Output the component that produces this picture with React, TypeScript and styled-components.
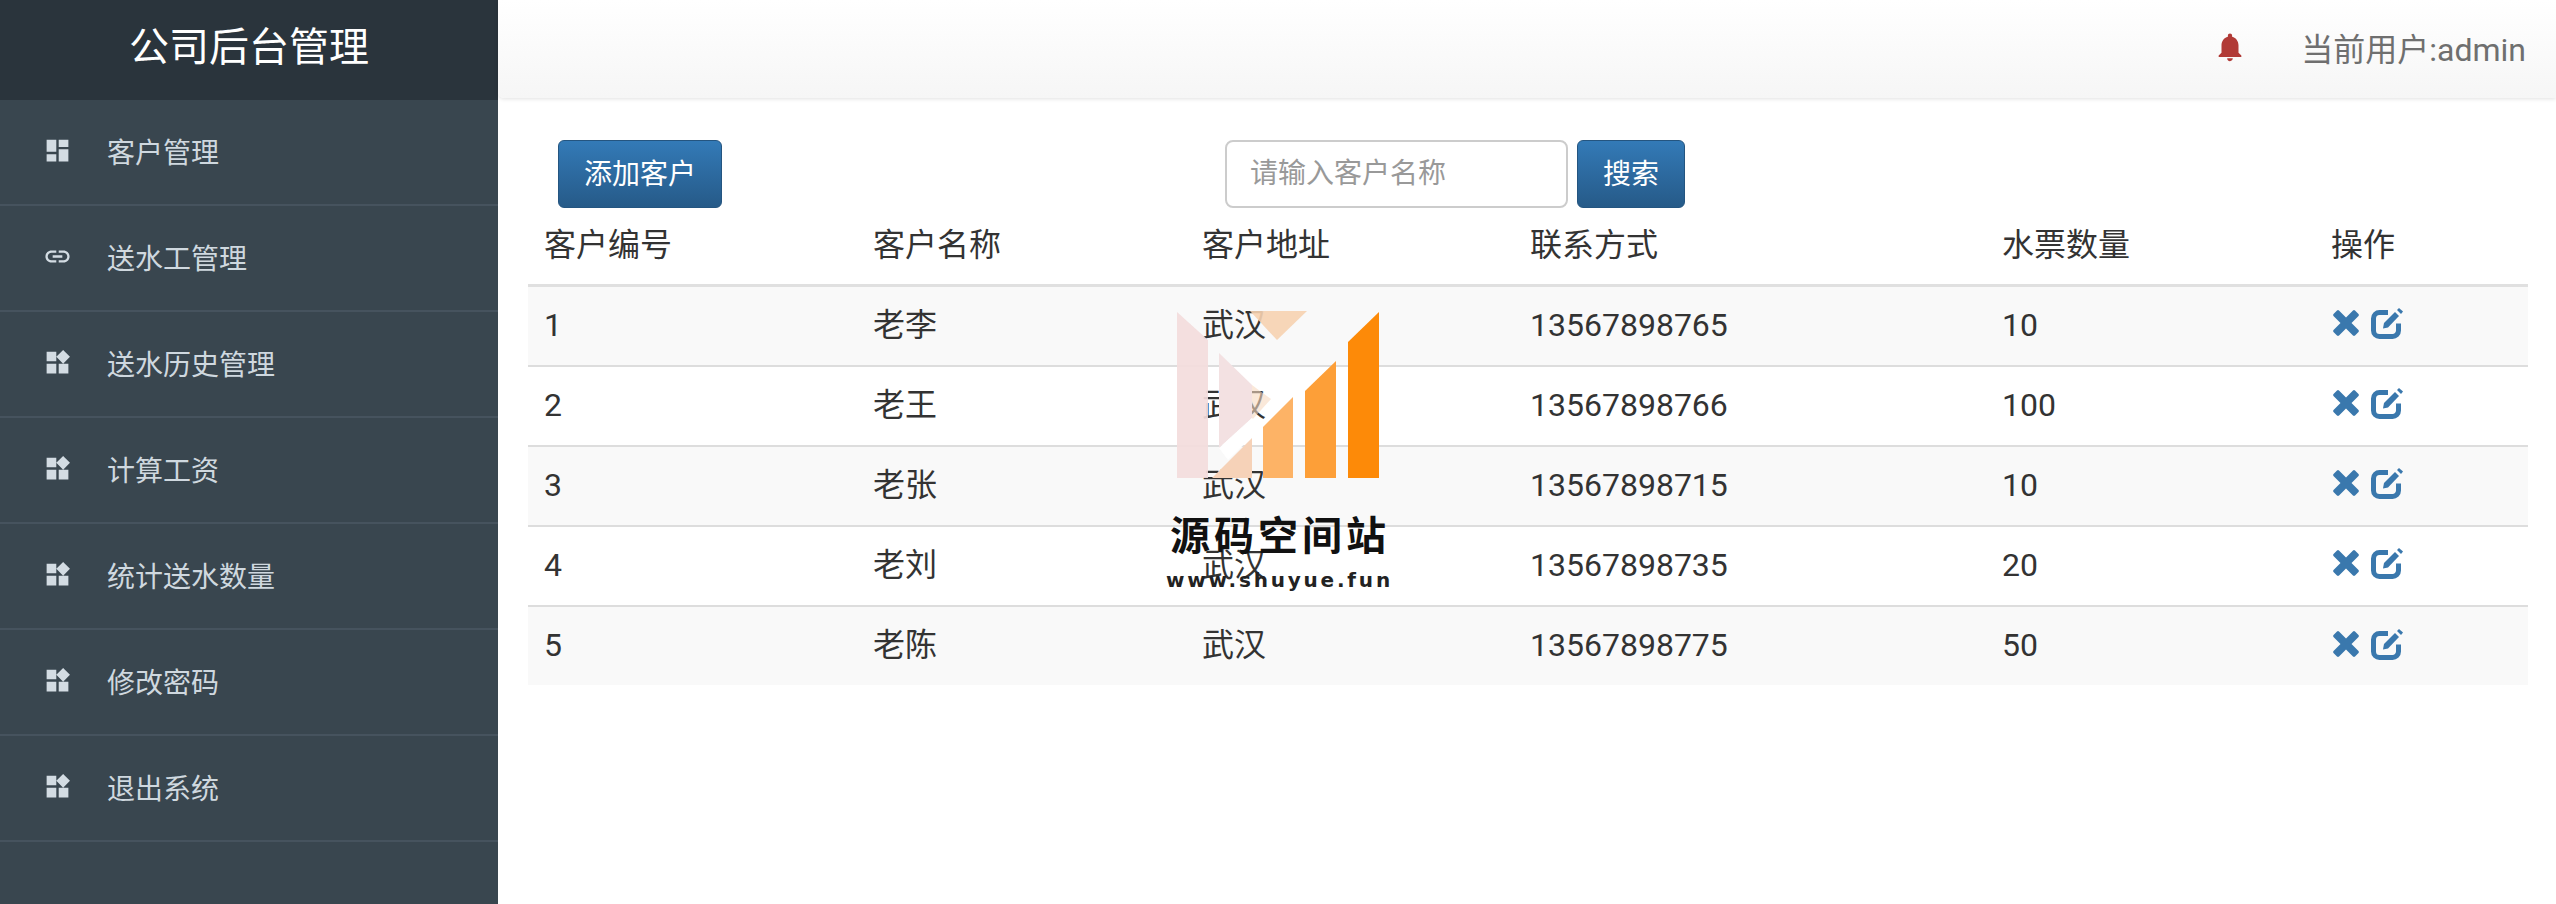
import React from 'react';
import styled, { createGlobalStyle } from 'styled-components';
import { MdDashboard, MdLink, MdNotifications, MdWidgets } from 'react-icons/md';

const GlobalStyle = createGlobalStyle`
  html, body {
    margin: 0;
    padding: 0;
    background: #fff;
  }
  body {
    font-family: Roboto, "Noto Sans CJK SC", sans-serif;
    color: #333;
    overflow: hidden;
  }
`;

const Page = styled.div`
  position: relative;
  display: flex;
  width: 2556px;
  height: 904px;
  overflow: hidden;
`;

const Sidebar = styled.aside`
  width: 498px;
  flex: none;
  background: #39464f;
`;

const Brand = styled.div`
  height: 100px;
  box-sizing: border-box;
  padding-bottom: 12px;
  display: flex;
  align-items: center;
  justify-content: center;
  background: #2a343c;
  color: #fff;
  font-size: 40px;
`;

const MenuItem = styled.div`
  height: 106px;
  box-sizing: border-box;
  padding: 0 0 3px 43px;
  display: flex;
  align-items: center;
  border-bottom: 2px solid #46535e;
  color: #cfd8df;
  font-size: 28px;
`;

const MenuIcon = styled.span`
  width: 64px;
  display: flex;
  align-items: center;
  font-size: 29px;
  color: #d3dce3;
`;

const Main = styled.main`
  flex: 1;
  min-width: 0;
`;

const TopBar = styled.header`
  height: 98px;
  box-sizing: border-box;
  padding: 0 30px 5px 0;
  display: flex;
  align-items: center;
  justify-content: flex-end;
  gap: 54px;
  background: linear-gradient(to bottom, #ffffff, #f6f6f6);
  border-bottom-left-radius: 6px;
  box-shadow: 0 1px 4px rgba(0, 0, 0, 0.12);
  color: #6f6f6f;
  font-size: 32px;
`;

const Bell = styled(MdNotifications)`
  font-size: 34px;
  color: #b13a36;
`;

const Content = styled.section`
  padding: 42px 28px 0 30px;
`;

const Toolbar = styled.div`
  display: flex;
  align-items: center;
  padding-left: 30px;
`;

const BlueButton = styled.button<{ $wide?: boolean }>`
  height: 68px;
  width: ${(p) => (p.$wide ? '164px' : '108px')};
  box-sizing: border-box;
  padding: 0 0 5px;
  border: 1px solid #245580;
  border-radius: 6px;
  background: linear-gradient(to bottom, #337ab7, #265a88);
  color: #fff;
  font-family: inherit;
  font-size: 28px;
`;

const SearchGroup = styled.div`
  display: flex;
  align-items: center;
  gap: 9px;
  margin-left: 503px;
`;

const SearchInput = styled.input`
  width: 343px;
  height: 68px;
  box-sizing: border-box;
  padding: 0 23px 2px;
  border: 2px solid #ccc;
  border-radius: 8px;
  font-family: inherit;
  font-size: 28px;
  color: #333;
  &::placeholder {
    color: #999;
  }
`;

const TableWrap = styled.div`
  margin-top: -1px;
  font-size: 32px;
`;

const Row = styled.div<{ $striped?: boolean; $head?: boolean }>`
  display: grid;
  grid-template-columns: 329px 329px 328px 472px 329px 213px;
  align-items: center;
  height: 80px;
  box-sizing: border-box;
  padding-bottom: ${(p) => (p.$head ? '1px' : '3px')};
  background: ${(p) => (p.$striped ? '#f9f9f9' : '#fff')};
  border-bottom: ${(p) => (p.$head ? '3px solid #e0e0e0' : '2px solid #ddd')};
  &:last-child {
    height: 78px;
    padding-bottom: 2px;
    border-bottom: none;
  }
`;

const Cell = styled.div`
  padding-left: 16px;
  line-height: 1;
`;

const Actions = styled.div`
  padding: 0 0 3px 16px;
  display: flex;
  align-items: center;
  gap: 10px;
  color: #3a78ad;
`;

const Mark = styled.div`
  position: absolute;
  left: 1100px;
  top: 280px;
  width: 320px;
  height: 330px;
  pointer-events: none;
`;

const MarkLogo = styled.svg`
  display: block;
  width: 320px;
  height: 200px;
`;

const MarkTitle = styled.div`
  position: absolute;
  left: 70px;
  top: 232px;
  font-size: 40px;
  line-height: 50px;
  font-weight: 700;
  letter-spacing: 4px;
  white-space: nowrap;
  color: #111;
`;

const MarkUrl = styled.div`
  position: absolute;
  left: 66px;
  top: 286px;
  font-family: "DejaVu Sans", sans-serif;
  font-size: 20px;
  line-height: 28px;
  font-weight: 700;
  letter-spacing: 2.8px;
  white-space: nowrap;
  color: #222;
`;

const CrossIcon = () => (
  <svg width="30" height="30" viewBox="0 0 30 30">
    <path
      fill="currentColor"
      d="M8 2.5 15 9.5 22 2.5a1.5 1.5 0 0 1 2 0L27.5 6a1.5 1.5 0 0 1 0 2L20.5 15l7 7a1.5 1.5 0 0 1 0 2L24 27.5a1.5 1.5 0 0 1-2 0L15 20.5 8 27.5a1.5 1.5 0 0 1-2 0L2.5 24a1.5 1.5 0 0 1 0-2L9.5 15l-7-7a1.5 1.5 0 0 1 0-2L6 2.5a1.5 1.5 0 0 1 2 0Z"
    />
  </svg>
);

const EditIcon = () => (
  <svg width="33" height="32" viewBox="0 0 33 32">
    <path
      fill="none"
      stroke="currentColor"
      strokeWidth="5"
      d="M17 5.5H8.5a6 6 0 0 0-6 6v12a6 6 0 0 0 6 6h13a6 6 0 0 0 6-6v-7"
    />
    <path fill="currentColor" d="M12 21.5 13 16 24 5 28 9 17 20.5Z" />
    <path fill="currentColor" d="M26 3 28 1 32 4.5 30 7Z" />
  </svg>
);

const menu = [
  { name: '客户管理', icon: <MdDashboard /> },
  { name: '送水工管理', icon: <MdLink /> },
  { name: '送水历史管理', icon: <MdWidgets /> },
  { name: '计算工资', icon: <MdWidgets /> },
  { name: '统计送水数量', icon: <MdWidgets /> },
  { name: '修改密码', icon: <MdWidgets /> },
  { name: '退出系统', icon: <MdWidgets /> },
];

const customers = [
  { id: 1, name: '老李', address: '武汉', phone: '13567898765', tickets: 10 },
  { id: 2, name: '老王', address: '武汉', phone: '13567898766', tickets: 100 },
  { id: 3, name: '老张', address: '武汉', phone: '13567898715', tickets: 10 },
  { id: 4, name: '老刘', address: '武汉', phone: '13567898735', tickets: 20 },
  { id: 5, name: '老陈', address: '武汉', phone: '13567898775', tickets: 50 },
];

const columns = ['客户编号', '客户名称', '客户地址', '联系方式', '水票数量', '操作'];

export default function App() {
  return (
    <Page>
      <GlobalStyle />
      <Sidebar>
        <Brand>公司后台管理</Brand>
        {menu.map((item) => (
          <MenuItem key={item.name}>
            <MenuIcon>{item.icon}</MenuIcon>
            {item.name}
          </MenuItem>
        ))}
      </Sidebar>
      <Main>
        <TopBar>
          <Bell />
          <span>当前用户:admin</span>
        </TopBar>
        <Content>
          <Toolbar>
            <BlueButton $wide>添加客户</BlueButton>
            <SearchGroup>
              <SearchInput placeholder="请输入客户名称" />
              <BlueButton>搜索</BlueButton>
            </SearchGroup>
          </Toolbar>
          <TableWrap>
            <Row $head>
              {columns.map((c) => (
                <Cell key={c}>{c}</Cell>
              ))}
            </Row>
            {customers.map((c, i) => (
              <Row key={c.id} $striped={i % 2 === 0}>
                <Cell>{c.id}</Cell>
                <Cell>{c.name}</Cell>
                <Cell>{c.address}</Cell>
                <Cell>{c.phone}</Cell>
                <Cell>{c.tickets}</Cell>
                <Actions>
                  <CrossIcon />
                  <EditIcon />
                </Actions>
              </Row>
            ))}
          </TableWrap>
        </Content>
      </Main>
      <Mark>
        <MarkLogo viewBox="0 0 320 200">
          <path fill="#f3dcdc" fillOpacity="0.92" d="M77 32 108 60V198H77Z" />
          <path fill="#f6d2b0" fillOpacity="0.9" d="M150 31H207L177 60Z" />
          <path fill="#f6d8bf" fillOpacity="0.6" d="M160 111 171 119 152 140V105Z" />
          <path fill="#f3e1e2" d="M119 73 152 105V138L119 168Z" />
          <path fill="#fff" d="M119 168 152 138 162 147 128 180Z" />
          <path fill="#f6d2b8" d="M152 158V198H112Z" />
          <path fill="#fdb366" d="M163 147 193 117V198H163Z" />
          <path fill="#fd9f38" d="M205 111 236 81V198H205Z" />
          <path fill="#fd8a08" d="M248 62 279 32V198H248Z" />
        </MarkLogo>
        <MarkTitle>源码空间站</MarkTitle>
        <MarkUrl>www.shuyue.fun</MarkUrl>
      </Mark>
    </Page>
  );
}
